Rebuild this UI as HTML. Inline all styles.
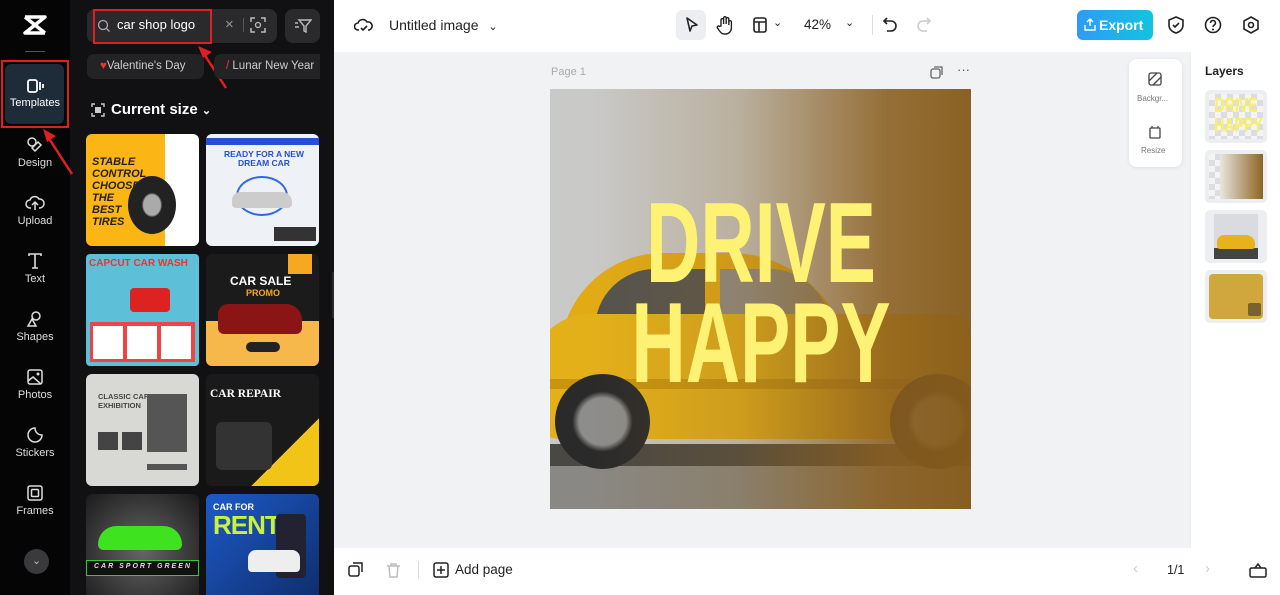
<!DOCTYPE html>
<html><head><meta charset="utf-8"><style>
*{margin:0;padding:0;box-sizing:border-box}
html,body{width:1280px;height:595px;overflow:hidden}
body{font-family:"Liberation Sans",sans-serif;background:#fff;position:relative}
.abs{position:absolute}
.side{left:0;top:0;width:70px;height:595px;background:#050505}
.panel{left:70px;top:0;width:264px;height:595px;background:#111113;overflow:hidden}
.nav{position:absolute;left:0;width:70px;text-align:center;color:#ddd;font-size:11px}
.nav svg{display:block;margin:0 auto 3px}
.th{position:absolute;width:113px;height:112px;border-radius:6px;overflow:hidden}
.t{font-weight:bold;position:absolute}
.lc{position:absolute;left:1205px;width:62px;height:53px;border-radius:5px;background:#eceef1}
.ck{position:absolute;left:4px;top:4px;width:54px;height:45px;background:repeating-conic-gradient(#dcdde0 0 25%,#f4f4f5 0 50%) 0 0/12px 12px}
</style></head><body>
<div class="abs side"></div>
<div class="abs panel">
<div class="th" style="left:16px;top:134px;background:linear-gradient(90deg,#fbb514 70%,#fff 70%)"><div class="t" style="left:6px;top:22px;color:#222;font-size:11px;line-height:12px;font-style:italic">STABLE<br>CONTROL<br>CHOOSE<br>THE<br>BEST<br>TIRES</div><div class="abs" style="left:42px;top:42px;width:48px;height:58px;border-radius:50%;background:radial-gradient(#aaa 25%,#222 30%)"></div></div>
<div class="th" style="left:136px;top:134px;background:#eef1f6"><div class="abs" style="left:0;top:4px;width:113px;height:7px;background:#2450d8"></div><div class="t" style="left:18px;top:16px;color:#2450d8;font-size:8.5px;text-align:center;line-height:9px">READY FOR A NEW<br>DREAM CAR</div><div class="abs" style="left:30px;top:42px;width:52px;height:40px;border:2px solid #2f6ae0;border-radius:50%"></div><div class="abs" style="left:26px;top:58px;width:60px;height:16px;border-radius:8px 10px 4px 4px;background:#ccc"></div><div class="abs" style="left:68px;top:93px;width:42px;height:14px;background:#333"></div></div>
<div class="th" style="left:16px;top:254px;background:#5ec0d8;border-radius:4px"><div class="t" style="left:3px;top:4px;color:#e33;font-size:10px">CAPCUT CAR WASH</div><div class="abs" style="left:44px;top:34px;width:40px;height:24px;border-radius:4px;background:#d22"></div><div class="abs" style="left:4px;top:68px;width:105px;height:40px;background:#e44"></div><div class="abs" style="left:7px;top:72px;width:30px;height:33px;background:#fff"></div><div class="abs" style="left:41px;top:72px;width:30px;height:33px;background:#fff"></div><div class="abs" style="left:75px;top:72px;width:30px;height:33px;background:#fff"></div></div>
<div class="th" style="left:136px;top:254px;background:linear-gradient(#1b1b1b 60%,#f7b84b 60%)"><div class="abs" style="left:82px;top:0;width:24px;height:20px;background:#f6a823"></div><div class="t" style="left:24px;top:20px;color:#fff;font-size:12px">CAR SALE</div><div class="t" style="left:40px;top:34px;color:#f6a823;font-size:9px">PROMO</div><div class="abs" style="left:12px;top:50px;width:84px;height:30px;border-radius:10px 16px 6px 6px;background:#8b1414"></div><div class="abs" style="left:40px;top:88px;width:34px;height:10px;border-radius:5px;background:#222"></div></div>
<div class="th" style="left:16px;top:374px;background:#d8d8d4"><div class="t" style="left:12px;top:18px;color:#444;font-size:7.5px">CLASSIC CAR<br>EXHIBITION</div><div class="abs" style="left:61px;top:20px;width:40px;height:58px;background:#555"></div><div class="abs" style="left:12px;top:58px;width:20px;height:18px;background:#444"></div><div class="abs" style="left:36px;top:58px;width:20px;height:18px;background:#444"></div><div class="abs" style="left:61px;top:90px;width:40px;height:6px;background:#555"></div></div>
<div class="th" style="left:136px;top:374px;background:linear-gradient(135deg,#1a1a1a 70%,#f2c418 70%)"><div class="t" style="left:4px;top:14px;color:#fff;font-size:11.5px;font-family:'Liberation Serif',serif">CAR REPAIR</div><div class="abs" style="left:10px;top:48px;width:56px;height:48px;border-radius:6px;background:#333"></div></div>
<div class="th" style="left:16px;top:494px;background:radial-gradient(#666,#1a1a1a)"><div class="abs" style="left:12px;top:32px;width:84px;height:24px;border-radius:20px 20px 6px 6px;background:#3ee21e"></div><div class="abs" style="left:0;top:66px;width:113px;height:16px;background:#111;border:1px solid #3c3"></div><div class="t" style="left:8px;top:69px;color:#ddd;font-size:7px;letter-spacing:2px;font-style:italic">CAR SPORT GREEN</div></div>
<div class="th" style="left:136px;top:494px;background:linear-gradient(135deg,#1d5ac8,#0e2c6a)"><div class="t" style="left:7px;top:8px;color:#fff;font-size:9px">CAR FOR</div><div class="t" style="left:7px;top:16px;color:#c9f23b;font-size:26px;letter-spacing:-1px">RENT</div><div class="abs" style="left:70px;top:20px;width:30px;height:64px;border-radius:4px;background:#223"></div><div class="abs" style="left:42px;top:56px;width:52px;height:22px;border-radius:8px 8px 4px 4px;background:#eee"></div></div>
</div>
<!-- logo -->
<svg class="abs" style="left:22px;top:14px" width="26" height="22" viewBox="0 0 26 22"><path d="M3 3h20L3 19h20M3 3l20 16" stroke="#fff" stroke-width="3.5" fill="none" stroke-linejoin="round"/></svg>
<div class="abs" style="left:25px;top:51px;width:20px;height:1px;background:#555"></div>
<div class="abs" style="left:5px;top:64px;width:59px;height:60px;border-radius:6px;background:#1e2b38"></div>
<div class="abs" style="left:1px;top:60px;width:68px;height:68px;border:2px solid #e02020"></div>
<div class="nav" style="top:78px;color:#fff"><svg width="18" height="16" viewBox="0 0 18 16"><rect x="2" y="2" width="9" height="12" rx="2" stroke="#fff" stroke-width="1.8" fill="none"/><path d="M14 4v8M17 6v4" stroke="#fff" stroke-width="1.8"/></svg>Templates</div>
<div class="nav" style="top:136px"><svg width="18" height="18" viewBox="0 0 18 18"><circle cx="6" cy="6" r="4" stroke="#ddd" stroke-width="1.5" fill="none"/><path d="M9 15l6-6-3-3-6 6z" stroke="#ddd" stroke-width="1.5" fill="none"/></svg>Design</div>
<div class="nav" style="top:194px"><svg width="20" height="18" viewBox="0 0 20 18"><path d="M6 14H5a4 4 0 010-8 5 5 0 019-1 4 4 0 011 9h-1M10 16V8M7 11l3-3 3 3" stroke="#ddd" stroke-width="1.5" fill="none"/></svg>Upload</div>
<div class="nav" style="top:252px"><svg width="18" height="18" viewBox="0 0 18 18"><path d="M3 4V2h12v2M9 2v14M6 16h6" stroke="#ddd" stroke-width="1.6" fill="none"/></svg>Text</div>
<div class="nav" style="top:310px"><svg width="18" height="18" viewBox="0 0 18 18"><circle cx="10" cy="6" r="4" stroke="#ddd" stroke-width="1.5" fill="none"/><path d="M6 9l-4 7h8z" stroke="#ddd" stroke-width="1.5" fill="none"/></svg>Shapes</div>
<div class="nav" style="top:368px"><svg width="18" height="18" viewBox="0 0 18 18"><rect x="2" y="2" width="14" height="14" rx="2" stroke="#ddd" stroke-width="1.5" fill="none"/><path d="M2 13l5-4 8 7" stroke="#ddd" stroke-width="1.5" fill="none"/><circle cx="12" cy="6" r="1.5" fill="#ddd"/></svg>Photos</div>
<div class="nav" style="top:426px"><svg width="18" height="18" viewBox="0 0 18 18"><path d="M16 9a7 7 0 11-7-7c0 4 3 7 7 7z" stroke="#ddd" stroke-width="1.5" fill="none"/></svg>Stickers</div>
<div class="nav" style="top:484px"><svg width="18" height="18" viewBox="0 0 18 18"><rect x="2" y="2" width="14" height="14" rx="2" stroke="#ddd" stroke-width="1.5" fill="none"/><rect x="5.5" y="5.5" width="7" height="7" rx="1" stroke="#ddd" stroke-width="1.5" fill="none"/></svg>Frames</div>
<div class="abs" style="left:24px;top:549px;width:25px;height:25px;border-radius:50%;background:#3a3a3c;color:#bbb;font-size:11px;text-align:center;line-height:25px">⌄</div>
<!-- search -->
<div class="abs" style="left:87px;top:9px;width:190px;height:34px;border-radius:8px;background:#2a2a2d"></div>
<div class="abs" style="left:93px;top:9px;width:119px;height:35px;border:2px solid #e02020"></div>
<svg class="abs" style="left:97px;top:19px" width="14" height="14"><circle cx="6" cy="6" r="4.5" stroke="#aaa" stroke-width="1.3" fill="none"/><path d="M9.5 9.5l3 3" stroke="#aaa" stroke-width="1.3"/></svg>
<div class="abs" style="left:117px;top:17px;color:#fff;font-size:13px">car shop logo</div>
<div class="abs" style="left:225px;top:16px;color:#999;font-size:15px">×</div>
<div class="abs" style="left:243px;top:18px;width:1px;height:14px;background:#555"></div>
<svg class="abs" style="left:250px;top:17px" width="16" height="16"><path d="M1 5V1h4M11 1h4v4M15 11v4h-4M5 15H1v-4" stroke="#bbb" stroke-width="1.5" fill="none"/><circle cx="8" cy="8" r="2.5" stroke="#bbb" stroke-width="1.3" fill="none"/></svg>
<div class="abs" style="left:285px;top:9px;width:35px;height:34px;border-radius:8px;background:#2a2a2d"></div>
<svg class="abs" style="left:294px;top:18px" width="18" height="16"><path d="M5 2h12l-5 6v6l-2-1V8z" stroke="#bbb" stroke-width="1.4" fill="none"/><path d="M1 5h3M1 9h4" stroke="#bbb" stroke-width="1.4"/></svg>
<svg class="abs" style="left:0;top:0" width="340" height="200"><path d="M226 88L204 54" stroke="#e02020" stroke-width="2.5"/><path d="M198 46l14 6-9 6z" fill="#e02020"/><path d="M72 174L48 137" stroke="#e02020" stroke-width="2.5"/><path d="M43 129l13 7-9 6z" fill="#e02020"/></svg>
<div class="abs" style="left:87px;top:54px;width:117px;height:25px;border-radius:7px;background:#232326;color:#ccc;font-size:11.5px;line-height:25px;padding-left:13px"><span style="color:#e33">♥</span>Valentine's Day</div>
<div class="abs" style="left:214px;top:54px;width:106px;height:25px;border-radius:7px 0 0 7px;background:#232326;color:#ccc;font-size:11.5px;line-height:25px;padding-left:12px;overflow:hidden;white-space:nowrap"><span style="color:#e33">/</span> Lunar New Year</div>
<svg class="abs" style="left:91px;top:103px" width="14" height="14"><path d="M1 4V1h3M10 1h3v3M13 10v3h-3M4 13H1v-3" stroke="#ccc" stroke-width="1.4" fill="none"/><rect x="4" y="4" width="6" height="6" fill="#ccc"/></svg>
<div class="abs" style="left:111px;top:101px;color:#fff;font-size:15px;font-weight:bold">Current size <span style="font-size:11px">⌄</span></div>
<div class="abs" style="left:332px;top:272px;width:8px;height:46px;border-radius:0 6px 6px 0;background:#2a2a2a"></div>
<!-- top bar -->
<svg class="abs" style="left:354px;top:16px" width="20" height="18"><path d="M5 14H4a3.5 3.5 0 010-7 5 5 0 019-1 3.5 3.5 0 012 8h-1" stroke="#222" stroke-width="1.6" fill="none"/><path d="M7 12l2 2 4-4" stroke="#222" stroke-width="1.6" fill="none"/></svg>
<div class="abs" style="left:389px;top:17px;font-size:14px;color:#222">Untitled image <span style="margin-left:6px;font-size:11px">⌄</span></div>
<div class="abs" style="left:676px;top:10px;width:30px;height:30px;border-radius:6px;background:#eceef1"></div>
<svg class="abs" style="left:684px;top:16px" width="16" height="18"><path d="M3 2l10 7-5 1-2 5z" stroke="#222" stroke-width="1.6" fill="none" stroke-linejoin="round"/></svg>
<svg class="abs" style="left:716px;top:15px" width="18" height="20"><path d="M5 11V5a1.3 1.3 0 012.6 0v4V3a1.3 1.3 0 012.6 0v6V4a1.3 1.3 0 012.6 0v6-3a1.3 1.3 0 012.6 0v6a6 6 0 01-6 6h-1a5 5 0 01-4-2l-3-4a1.3 1.3 0 012-1.6z" stroke="#222" stroke-width="1.4" fill="none"/></svg>
<svg class="abs" style="left:752px;top:16px" width="16" height="18"><rect x="2" y="2" width="12" height="14" rx="2" stroke="#222" stroke-width="1.6" fill="none"/><path d="M2 6h12M7 6v10" stroke="#222" stroke-width="1.6"/></svg>
<div class="abs" style="left:773px;top:16px;font-size:11px;color:#222">⌄</div>
<div class="abs" style="left:804px;top:17px;font-size:13.5px;color:#222">42%</div>
<div class="abs" style="left:845px;top:16px;font-size:11px;color:#222">⌄</div>
<div class="abs" style="left:872px;top:15px;width:1px;height:20px;background:#ddd"></div>
<svg class="abs" style="left:882px;top:16px" width="16" height="18"><path d="M5 2L2 5l3 3M2 5h7a5 5 0 010 10H5" stroke="#222" stroke-width="1.6" fill="none"/></svg>
<svg class="abs" style="left:916px;top:16px" width="16" height="18"><path d="M11 2l3 3-3 3M14 5H7a5 5 0 000 10h4" stroke="#ccc" stroke-width="1.6" fill="none"/></svg>
<div class="abs" style="left:1077px;top:10px;width:76px;height:30px;border-radius:6px;background:linear-gradient(90deg,#2f9bf5,#13c3e0);color:#fff;font-size:14px;font-weight:bold;line-height:30px;padding-left:22px">Export</div>
<svg class="abs" style="left:1084px;top:18px" width="12" height="13"><path d="M6 1v7M3 4l3-3 3 3M1 7v5h10V7" stroke="#fff" stroke-width="1.4" fill="none"/></svg>
<svg class="abs" style="left:1167px;top:16px" width="18" height="18"><path d="M9 1l7 3v5c0 4-3 7-7 8-4-1-7-4-7-8V4z" stroke="#222" stroke-width="1.6" fill="none"/><path d="M6 9l2 2 4-4" stroke="#222" stroke-width="1.6" fill="none"/></svg>
<svg class="abs" style="left:1204px;top:16px" width="18" height="18"><circle cx="9" cy="9" r="7.5" stroke="#222" stroke-width="1.6" fill="none"/><path d="M6.5 7a2.5 2.5 0 115 0c0 2-2.5 2-2.5 4" stroke="#222" stroke-width="1.6" fill="none"/><circle cx="9" cy="13.5" r="1" fill="#222"/></svg>
<svg class="abs" style="left:1242px;top:16px" width="18" height="18"><path d="M9 1l7 4v8l-7 4-7-4V5z" stroke="#222" stroke-width="1.6" fill="none"/><circle cx="9" cy="9" r="2.5" stroke="#222" stroke-width="1.6" fill="none"/></svg>
<!-- canvas area -->
<div class="abs" style="left:334px;top:52px;width:856px;height:496px;background:#f1f2f4"></div>
<div class="abs" style="left:551px;top:66px;font-size:11px;color:#aaa">Page 1</div>
<svg class="abs" style="left:930px;top:66px" width="13" height="13"><rect x="1" y="3" width="9" height="9" rx="2" stroke="#666" stroke-width="1.3" fill="none"/><path d="M4 1h8v8" stroke="#666" stroke-width="1.3" fill="none"/></svg>
<div class="abs" style="left:957px;top:62px;font-size:13px;color:#555">···</div>
<div class="abs" style="left:550px;top:89px;width:421px;height:420px;overflow:hidden;background:#c9c9c7">
 <div class="abs" style="left:0;top:375px;width:421px;height:45px;background:#8a8884"></div>
 <div class="abs" style="left:0;top:355px;width:421px;height:22px;background:#4a4843"></div>
 <div class="abs" style="left:10px;top:164px;width:290px;height:120px;border-radius:120px 140px 0 0;background:#e2ab16"></div>
 <div class="abs" style="left:45px;top:180px;width:110px;height:60px;border-radius:70px 0 0 0;background:#55534f"></div>
 <div class="abs" style="left:170px;top:180px;width:110px;height:60px;border-radius:0 60px 0 0;background:#8e8c88"></div>
 <div class="abs" style="left:-20px;top:225px;width:441px;height:125px;border-radius:60px 20px 10px 30px;background:#e4b01a"></div>
 <div class="abs" style="left:0;top:290px;width:421px;height:10px;background:#c9950e"></div>
 <div class="abs" style="left:5px;top:285px;width:95px;height:95px;border-radius:50%;background:radial-gradient(#8d8d8b 35%,#2a2a2a 45%)"></div>
 <div class="abs" style="left:340px;top:285px;width:95px;height:95px;border-radius:50%;background:radial-gradient(#8d8d8b 35%,#2a2a2a 45%)"></div>
 <div class="abs" style="left:0;top:0;width:421px;height:420px;background:linear-gradient(90deg,rgba(140,100,35,0) 10%,rgba(140,100,35,.25) 45%,rgba(140,95,30,.85) 80%,rgba(135,92,28,.95) 100%)"></div>
 <div class="t" style="left:0;width:421px;text-align:center;top:105px;color:#fdf273;font-size:114px;line-height:100px;transform:scaleX(.66);transform-origin:212px 0">DRIVE<br>HAPPY</div>
</div>
<!-- floating tools -->
<div class="abs" style="left:1129px;top:59px;width:53px;height:108px;border-radius:8px;background:#fff;box-shadow:0 1px 4px rgba(0,0,0,.08)"></div>
<svg class="abs" style="left:1148px;top:72px" width="14" height="14"><rect x="1" y="1" width="12" height="12" rx="2" stroke="#444" stroke-width="1.3" fill="none"/><path d="M1 9l8-8M5 13l8-8" stroke="#444" stroke-width="1.3"/></svg>
<div class="abs" style="left:1137px;top:94px;font-size:8px;color:#777">Backgr...</div>
<svg class="abs" style="left:1148px;top:125px" width="14" height="14"><rect x="2" y="3" width="10" height="10" rx="1" stroke="#444" stroke-width="1.3" fill="none"/><path d="M4 1v2M10 1v2" stroke="#444" stroke-width="1.3"/></svg>
<div class="abs" style="left:1141px;top:146px;font-size:8px;color:#777">Resize</div>
<!-- layers -->
<div class="abs" style="left:1190px;top:52px;width:90px;height:496px;background:#fff;border-left:1px solid #eee"></div>
<div class="abs" style="left:1205px;top:64px;font-size:12px;font-weight:bold;color:#222">Layers</div>
<div class="lc" style="top:90px"><div class="ck"></div><div class="t" style="left:0;width:62px;text-align:center;top:6px;color:#fbef62;font-size:20px;line-height:20px;transform:scaleX(.7)">DRIVE<br>HAPPY</div></div>
<div class="lc" style="top:150px"><div class="ck" style="left:15px;width:43px;background:linear-gradient(90deg,rgba(230,225,210,.6),#8e6422)"></div><div class="ck" style="width:11px"></div></div>
<div class="lc" style="top:210px"><div class="ck" style="left:9px;width:44px;background:#d9dbe0"></div><div class="abs" style="left:9px;top:38px;width:44px;height:11px;background:#444"></div><div class="abs" style="left:12px;top:25px;width:38px;height:14px;border-radius:7px 9px 3px 3px;background:#e8b21a"></div></div>
<div class="lc" style="top:270px"><div class="abs" style="left:4px;top:4px;width:54px;height:45px;border-radius:4px;background:#cfa73d"></div><div class="abs" style="left:43px;top:33px;width:13px;height:13px;border-radius:2px;background:#7a6230"></div></div>
<!-- bottom -->
<svg class="abs" style="left:348px;top:562px" width="16" height="16"><rect x="1" y="4" width="10" height="10" rx="2" stroke="#222" stroke-width="1.5" fill="none"/><path d="M5 1h9v9" stroke="#222" stroke-width="1.5" fill="none"/></svg>
<svg class="abs" style="left:386px;top:562px" width="15" height="16"><path d="M1 4h13M5 4V2h5v2M3 4l1 11h7l1-11" stroke="#bbb" stroke-width="1.4" fill="none"/></svg>
<div class="abs" style="left:418px;top:561px;width:1px;height:18px;background:#ddd"></div>
<svg class="abs" style="left:433px;top:562px" width="16" height="16"><rect x="1" y="1" width="14" height="14" rx="2" stroke="#222" stroke-width="1.5" fill="none"/><path d="M8 4v8M4 8h8" stroke="#222" stroke-width="1.5"/></svg>
<div class="abs" style="left:455px;top:562px;font-size:13.5px;color:#222">Add page</div>
<div class="abs" style="left:1133px;top:560px;font-size:15px;color:#ccc">‹</div>
<div class="abs" style="left:1167px;top:563px;font-size:12.5px;color:#222">1/1</div>
<div class="abs" style="left:1205px;top:560px;font-size:15px;color:#ccc">›</div>
<svg class="abs" style="left:1249px;top:562px" width="18" height="16"><rect x="1" y="6" width="16" height="9" rx="1.5" stroke="#222" stroke-width="1.5" fill="none"/><path d="M6 6l3-4 3 4" stroke="#222" stroke-width="1.5" fill="none"/></svg>
</body></html>
